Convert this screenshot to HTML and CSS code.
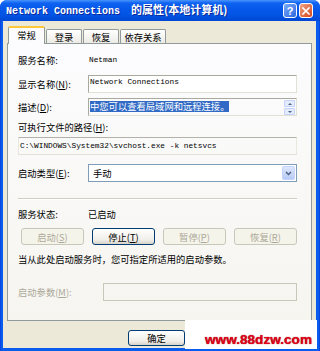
FILE: index.html
```html
<!DOCTYPE html>
<html lang="zh-CN">
<head>
<meta charset="utf-8">
<title>Network Connections 的属性(本地计算机)</title>
<link rel="stylesheet" href="styles.css">
</head>
<body>
<div class="window">
  <div class="titlebar">
    <div class="title"><span class="tl">Network Connections</span><span class="tc">的属性(本地计算机)</span></div>
    <div class="tbtns">
      <span class="tb help">?</span>
      <span class="tb close"><svg width="8" height="8" viewBox="0 0 8 8"><path d="M1 1L7 7M7 1L1 7" stroke="#fff" stroke-width="1.6" stroke-linecap="square"/></svg></span>
    </div>
  </div>
  <div class="client">
    <div class="tabs">
      <div class="tab sel">常规</div>
      <div class="tab t2">登录</div>
      <div class="tab t3">恢复</div>
      <div class="tab t4">依存关系</div>
    </div>
    <div class="panel">
      <div class="row r1"><span class="lbl">服务名称:</span><span class="mono val">Netman</span></div>
      <div class="row r2"><span class="lbl">显示名称(<u>N</u>):</span><div class="edit white"><span class="mono">Network Connections</span></div></div>
      <div class="row r3"><span class="lbl">描述(<u>D</u>):</span>
        <div class="edit desc"><span class="hl">中您可以查看局域网和远程连接。</span>
          <div class="scroll"><span class="sb up"></span><span class="sb down"></span></div>
        </div>
      </div>
      <div class="row r4"><span>可执行文件的路径(<u>H</u>):</span></div>
      <div class="row r5"><div class="edit path"><span class="mono">C:\WINDOWS\System32\svchost.exe -k netsvcs</span></div></div>
      <div class="row r6"><span class="lbl">启动类型(<u>E</u>):</span>
        <div class="combo"><span class="ctext">手动</span><span class="cbtn"><svg width="7" height="5" viewBox="0 0 7 5"><path d="M1 1L3.5 3.5L6 1" fill="none" stroke="#4D6185" stroke-width="1.5"/></svg></span></div>
      </div>
      <div class="sep"></div>
      <div class="row r7"><span class="lbl">服务状态:</span><span>已启动</span></div>
      <div class="btnrow">
        <button class="btn dis">启动(<u>S</u>)</button>
        <button class="btn">停止(<u>T</u>)</button>
        <button class="btn dis">暂停(<u>P</u>)</button>
        <button class="btn dis">恢复(<u>R</u>)</button>
      </div>
      <div class="row r9"><span>当从此处启动服务时，您可指定所适用的启动参数。</span></div>
      <div class="row r10"><span class="lbl lbl2 grey">启动参数(<u>M</u>):</span><div class="edit param"></div></div>
    </div>
    <div class="footer"><button class="btn ok">确定</button></div>
  </div>
  <div class="watermark">www.88dzw.com</div>
</div>
</body>
</html>
```

FILE: styles.css
```css
* { box-sizing: border-box; margin: 0; padding: 0; }
html, body { width: 320px; height: 351px; overflow: hidden; }
body {
  background: #ffffff;
  font-family: "Noto Sans CJK SC", "Liberation Sans", sans-serif;
  font-size: 9.3px;
  color: #000;
}
.window {
  position: relative;
  width: 320px;
  height: 351px;
  display: flex;
  flex-direction: column;
  background: linear-gradient(90deg, #0831D9 0, #0A5CEC 1px, #0A5CEC 319px, #0831D9 320px);
  border-radius: 7px 7px 0 0;
}
.titlebar {
  height: 21px;
  flex: none;
  display: flex;
  align-items: center;
  padding: 0 7px 0 6px;
  border-radius: 7px 7px 0 0;
  background: linear-gradient(180deg, #4A94FF 0, #0F63F0 3px, #0558EA 9px, #0254E4 15px, #0047D4 21px);
}
.title {
  flex: 1;
  color: #fff;
  font-weight: bold;
  font-size: 11px;
  white-space: nowrap;
  text-shadow: 1px 1px 0 #0A2A9C;
  line-height: 21px;
}
.tl { font-family: "Liberation Mono", monospace; font-size: 10px; }
.tc { margin-left: 11px; }
.tbtns { display: flex; gap: 2px; }
.tb {
  width: 14px;
  height: 15px;
  border: 1px solid #fff;
  border-radius: 3px;
  display: flex;
  align-items: center;
  justify-content: center;
}
.help {
  background: linear-gradient(135deg, #7BABF9, #2B66E0);
  color: #fff;
  font: bold 11px "Liberation Sans", sans-serif;
}
.close { background: linear-gradient(135deg, #F0A586, #D4451B); }

.client {
  flex: 1;
  margin: 0 4px 3px 3px;
  background: #ECE9D8;
  display: flex;
  flex-direction: column;
}
.tabs {
  height: 22px;
  flex: none;
  display: flex;
  align-items: flex-end;
  padding-left: 5px;
}
.tab {
  height: 14px;
  border: 1px solid #919B9C;
  border-bottom: none;
  border-radius: 2px 2px 0 0;
  background: linear-gradient(#FFFFFF, #ECEBE5);
  display: flex;
  align-items: center;
  justify-content: center;
  white-space: nowrap;
}
.tab.sel {
  position: relative;
  z-index: 1;
  width: 37px;
  height: 18px;
  margin-bottom: -1px;
  background: #FCFCFE;
  border-top: 2px solid #FFC83C;
  padding-bottom: 2px;
}
.t2 { width: 36px; margin-left: 1px; }
.t3 { width: 36px; margin-left: 1px; }
.t4 { width: 46px; margin-left: 1px; }

.panel {
  margin: 0 4px;
  height: 278px;
  flex: none;
  border: 1px solid #919B9C;
  background: linear-gradient(#FCFCFE, #F6F5F0);
  padding: 8px 14px 0 10px;
  display: flex;
  flex-direction: column;
}
.row { display: flex; align-items: center; flex: none; }
.lbl { width: 70px; flex: none; white-space: nowrap; }
.lbl2 { width: 85px; }
.grey { color: #ACA899; }
.mono {
  font-family: "Liberation Mono", monospace;
  font-size: 7.8px;
  white-space: nowrap;
}
.val { padding-left: 1px; }
.r1 { height: 16px; }
.r2 { height: 18px; margin-top: 7px; }
.r3 { height: 18px; margin-top: 5px; }
.r4 { height: 14px; margin-top: 4px; }
.r5 { height: 18px; margin-top: 3px; }
.r6 { height: 18px; margin-top: 9px; }
.r7 { height: 14px; margin-top: 7px; }
.r9 { height: 14px; margin-top: 7px; }
.r10 { height: 18px; margin-top: 17px; }

.edit {
  flex: 1;
  height: 18px;
  border: 1px solid #A9A9A1;
  border-right-color: #E3E1D6;
  border-bottom-color: #E3E1D6;
  display: flex;
  align-items: center;
  padding-left: 1px;
}
.white { background: #fff; align-items: flex-start; padding-top: 2px; }
.desc { position: relative; align-items: flex-start; padding-top: 2px; }
.hl {
  background: #316AC5;
  color: #fff;
  line-height: 11px;
  white-space: nowrap;
}
.scroll {
  margin-left: auto;
  margin-right: 1px;
  margin-top: -1px;
  display: flex;
  flex-direction: column;
  gap: 1px;
}
.sb {
  width: 11px;
  height: 7px;
  border: 1px solid #C3D3FD;
  border-radius: 1px;
  background: #E4EBFC;
  display: flex;
  align-items: center;
  justify-content: center;
}
.sb::after {
  content: "";
  width: 0;
  height: 0;
  border-left: 2px solid transparent;
  border-right: 2px solid transparent;
}
.up::after { border-bottom: 2px solid #4D6185; }
.down::after { border-top: 2px solid #4D6185; }
.path { border-left-color: #EAE8DD; border-right-color: #EAE8DD; border-top-color: #B4B2A8; border-bottom-color: #E3E1D6; }
.param { border-color: #C9C7BA; }

.combo {
  flex: 1;
  height: 18px;
  border: 1px solid #7F9DB9;
  background: #fff;
  display: flex;
  align-items: center;
  padding: 1px;
}
.ctext { flex: 1; padding-left: 3px; }
.cbtn {
  width: 13px;
  height: 14px;
  border: 1px solid #C3D3FD;
  border-radius: 2px;
  background: linear-gradient(#DDE7FC, #B9CBF5);
  display: flex;
  align-items: center;
  justify-content: center;
}
.sep {
  height: 2px;
  margin-top: 16px;
  border-top: 1px solid #D0D0BF;
  border-bottom: 1px solid #fff;
  flex: none;
}
.btnrow {
  margin-top: 7px;
  padding-left: 3px;
  display: grid;
  grid-template-columns: repeat(4, 63px);
  column-gap: 8px;
  flex: none;
}
.btn {
  height: 17px;
  border: 1px solid #003C74;
  border-radius: 3px;
  background: linear-gradient(#FFFFFF, #F0EFEA 70%, #D8D3C8);
  font: inherit;
  color: #000;
  display: flex;
  align-items: center;
  justify-content: center;
}
.btn.dis {
  border-color: #C9C7BA;
  background: #F5F4EA;
  color: #ACA899;
}
.footer {
  padding: 9px 0 0 125px;
}
.ok { width: 57px; height: 16px; }

.watermark {
  position: absolute;
  left: 185px;
  top: 320px;
  width: 132px;
  height: 29px;
  background: #fff;
  color: #E2001A;
  font: bold 13.6px "Liberation Sans", sans-serif;
  line-height: 14px;
  padding: 13px 0 0 20px;
  white-space: nowrap;
  text-shadow: 0 0 1px #700;
}
```
